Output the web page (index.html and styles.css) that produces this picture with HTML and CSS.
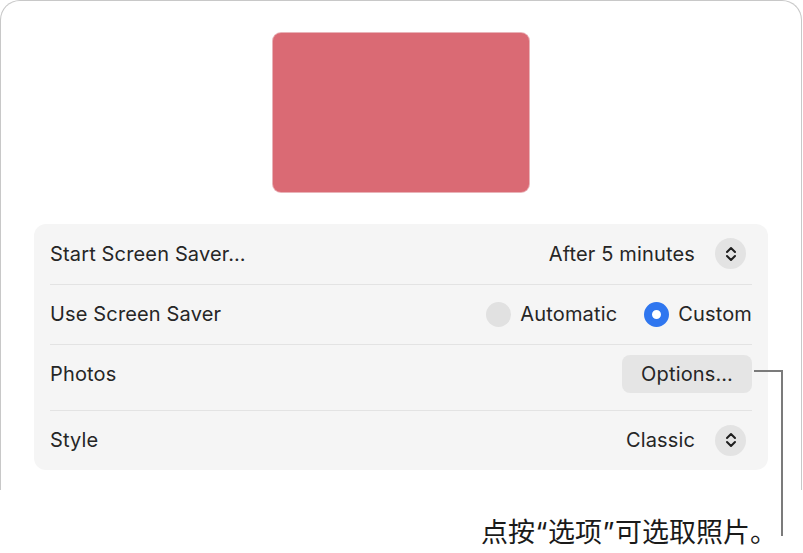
FILE: index.html
```html
<!DOCTYPE html>
<html lang="zh-CN">
<head>
<meta charset="utf-8">
<title>Screen Saver</title>
<link rel="stylesheet" href="styles.css">
</head>
<body>
<div class="page">
  <div class="window">
    <div class="preview"></div>
    <div class="panel">
      <div class="row">
        <span class="label">Start Screen Saver…</span>
        <div class="control">
          <span class="value">After 5 minutes</span>
          <span class="stepper">
            <svg width="12" height="18" viewBox="0 0 12 18"><path d="M2 7 L6 3 L10 7 M2 11 L6 15 L10 11" fill="none" stroke="#1e1e1e" stroke-width="2" stroke-linecap="round" stroke-linejoin="round"/></svg>
          </span>
        </div>
      </div>
      <div class="row">
        <span class="label">Use Screen Saver</span>
        <div class="control radios">
          <span class="radio-item"><span class="radio"></span><span class="value">Automatic</span></span>
          <span class="radio-item"><span class="radio on"></span><span class="value">Custom</span></span>
        </div>
      </div>
      <div class="row tall">
        <span class="label">Photos</span>
        <div class="control">
          <span class="button">Options…</span>
        </div>
      </div>
      <div class="row">
        <span class="label">Style</span>
        <div class="control">
          <span class="value">Classic</span>
          <span class="stepper">
            <svg width="12" height="18" viewBox="0 0 12 18"><path d="M2 7 L6 3 L10 7 M2 11 L6 15 L10 11" fill="none" stroke="#1e1e1e" stroke-width="2" stroke-linecap="round" stroke-linejoin="round"/></svg>
          </span>
        </div>
      </div>
    </div>
  </div>
  <div class="callout-line"></div>
  <p class="callout">点按<span class="q">“</span>选项<span class="q">”</span>可选取照片。</p>
</div>
</body>
</html>
```
FILE: styles.css
```css
html, body {
  margin: 0;
  padding: 0;
  background: #ffffff;
}
.page {
  position: relative;
  width: 803px;
  height: 553px;
  overflow: hidden;
  font-family: "Inter", "Liberation Sans", sans-serif;
  color: #242424;
}
.window {
  box-sizing: border-box;
  width: 802px;
  height: 490px;
  border: 1.5px solid #c8c8c8;
  border-bottom: none;
  border-radius: 20px 20px 0 0;
  padding-top: 31.5px;
  display: flex;
  flex-direction: column;
  align-items: center;
}
.preview {
  width: 256px;
  height: 159px;
  border-radius: 8px;
  background: #da6a74;
  box-shadow: 0 0 0 1px #e9b3b8;
}
.panel {
  box-sizing: border-box;
  margin-top: 32px;
  width: 734px;
  background: #f5f5f5;
  border-radius: 12px;
  padding: 0 16px;
}
.row {
  display: flex;
  align-items: center;
  justify-content: space-between;
  height: 60px;
  font-size: 20px;
  letter-spacing: 0.15px;
}
.row + .row {
  border-top: 1px solid #e3e3e3;
  height: 59px;
}
.row.tall {
  box-sizing: border-box;
  height: 66px;
  padding-bottom: 6px;
}
.label {
  color: #262626;
}
.control {
  display: flex;
  align-items: center;
  gap: 20px;
}
.value {
  color: #262626;
}
.stepper {
  width: 31px;
  height: 31px;
  border-radius: 50%;
  background: #e3e3e3;
  display: flex;
  align-items: center;
  justify-content: center;
  margin-right: 6px;
}
.radios {
  gap: 27px;
}
.radio-item {
  display: flex;
  align-items: center;
  gap: 9px;
}
.radio {
  box-sizing: border-box;
  width: 25px;
  height: 25px;
  border-radius: 50%;
  background: #e1e1e1;
}
.radio.on {
  border: 8.5px solid #2f76ef;
  background: #ffffff;
}
.button {
  box-sizing: border-box;
  width: 130px;
  height: 38px;
  border-radius: 8px;
  background: #e5e5e5;
  display: flex;
  align-items: center;
  justify-content: center;
  color: #262626;
}
.callout-line {
  position: absolute;
  left: 754px;
  top: 370px;
  width: 27px;
  height: 164px;
  border-top: 2px solid #7b7b7b;
  border-right: 2px solid #7b7b7b;
}
.callout {
  position: absolute;
  left: 481px;
  top: 515px;
  margin: 0;
  font-family: "Noto Sans CJK SC", sans-serif;
  font-size: 27px;
  line-height: 32px;
  color: #1a1a1a;
  white-space: nowrap;
}
.q {
  font-family: "Inter", "Liberation Sans", sans-serif;
  display: inline-block;
  width: 13px;
  text-align: center;
}
```
